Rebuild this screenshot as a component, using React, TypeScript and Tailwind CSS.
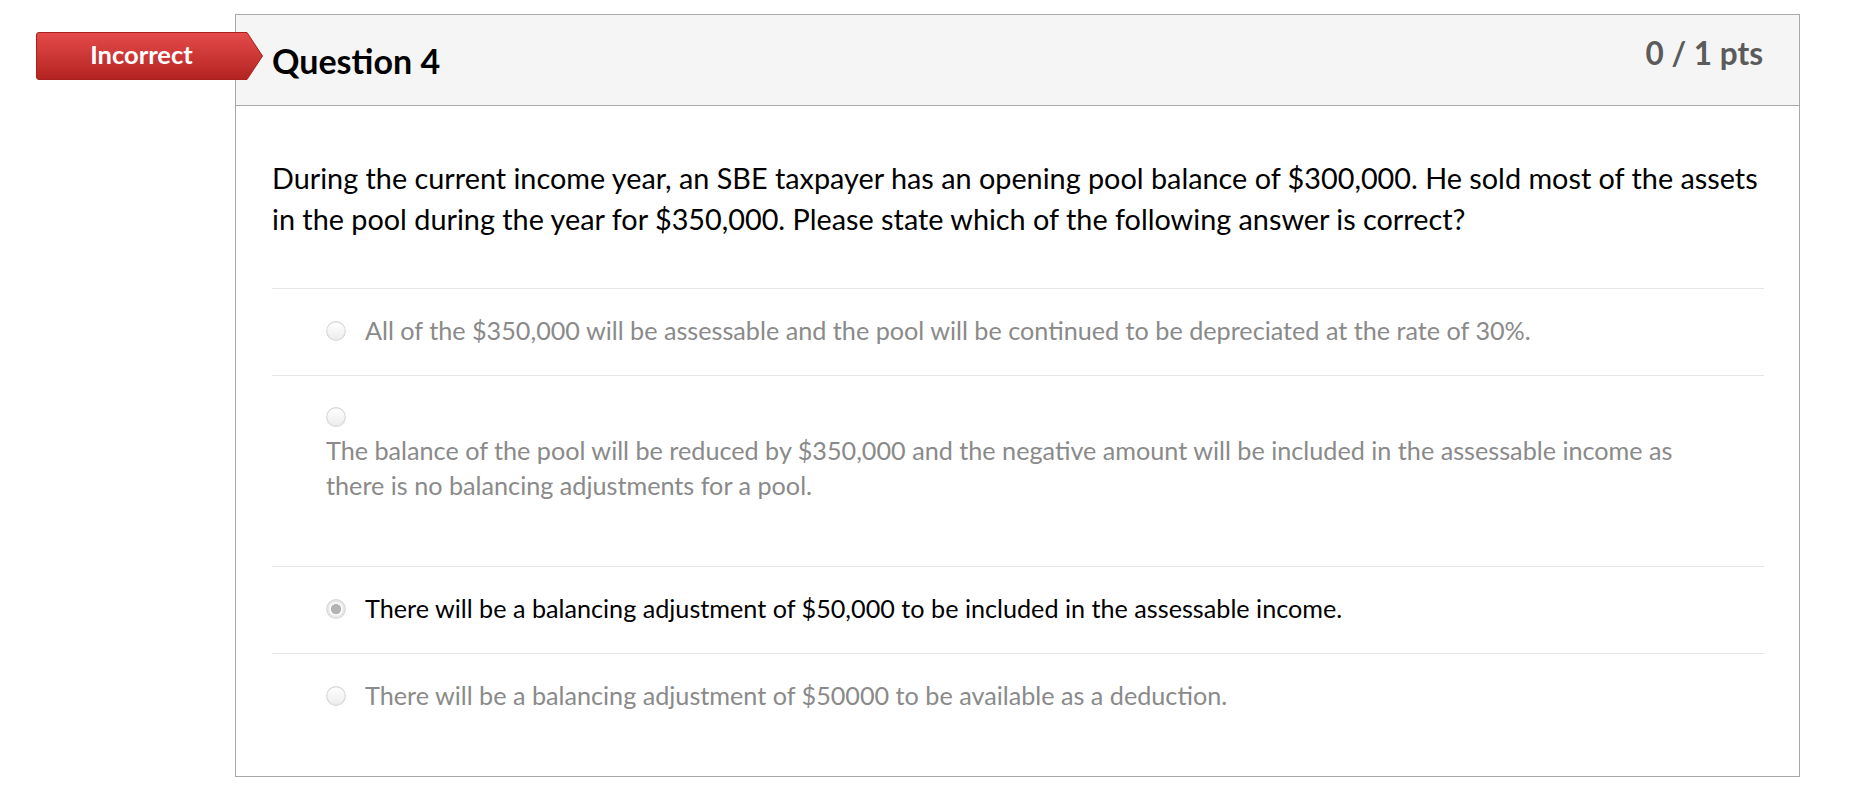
import React from "react";

function Radio({ checked }: { checked?: boolean }) {
  return (
    <svg width="20" height="20" viewBox="0 0 20 20" className="shrink-0">
      <defs>
        <linearGradient id={checked ? "rg1" : "rg0"} x1="0" y1="0" x2="0" y2="1">
          <stop offset="0" stopColor="#ffffff" />
          <stop offset="1" stopColor="#ececec" />
        </linearGradient>
      </defs>
      <circle cx="10" cy="10" r="9.3" fill={checked ? "#e9e9e9" : "url(#rg0)"} stroke="#d8d8d8" strokeWidth="1.2" />
      {checked && (
        <>
          <circle cx="10" cy="10" r="6.6" fill="#ffffff" />
          <circle cx="10" cy="10" r="5.2" fill="#b3b3b3" />
        </>
      )}
    </svg>
  );
}

function Option({ text, checked }: { text: string; checked?: boolean }) {
  return (
    <div className="border-t border-[#e6e6e6] pt-[24px] pb-[27px] pl-[54px]">
      <div className="flex items-center h-[35px] gap-[19px]">
        <Radio checked={checked} />
        <span className={checked ? "text-black" : "text-[#8a8a8a]"}>{text}</span>
      </div>
    </div>
  );
}

export default function App() {
  return (
    <div className="relative w-full h-[796px] bg-white font-[Lato,sans-serif] overflow-hidden">
      <div className="pt-[14px] pl-[235px]">
        <div className="w-[1565px] h-[763px] border border-[#a9a9a9] bg-white">
          <div className="h-[91px] bg-[#f5f5f5] border-b border-[#a9a9a9] flex justify-between px-[36px]">
            <h2 className="pt-[29px] text-[34px] leading-[34px] font-bold text-black">Question 4</h2>
            <div className="pt-[23px] text-[31.5px] leading-[31.5px] font-bold text-[#5b5b5b]">0 / 1 pts</div>
          </div>
          <div className="pl-[36px] pr-[35px] pt-[52px]">
            <p className="text-[28.8px] leading-[41px] text-black whitespace-nowrap">
              During the current income year, an SBE taxpayer has an opening pool balance of $300,000. He sold most of the assets
              <br />
              in the pool during the year for $350,000. Please state which of the following answer is correct?
            </p>
            <div className="mt-[48px] text-[25.2px] leading-[35px]">
              <Option text="All of the $350,000 will be assessable and the pool will be continued to be depreciated at the rate of 30%." />
              <div className="border-t border-[#e6e6e6] pt-[24px] pb-[63px] pl-[54px]">
                <div className="flex items-center h-[33px]">
                  <Radio />
                </div>
                <p className="text-[#8a8a8a]">
                  The balance of the pool will be reduced by $350,000 and the negative amount will be included in the assessable income as
                  <br />
                  there is no balancing adjustments for a pool.
                </p>
              </div>
              <Option text="There will be a balancing adjustment of $50,000 to be included in the assessable income." checked />
              <div className="border-t border-[#e6e6e6] pt-[24px] pl-[54px]">
                <div className="flex items-center h-[35px] gap-[19px]">
                  <Radio />
                  <span className="text-[#8a8a8a]">There will be a balancing adjustment of $50000 to be available as a deduction.</span>
                </div>
              </div>
            </div>
          </div>
        </div>
      </div>

      <div className="absolute left-[36px] top-[32px] w-[227px] h-[48px]">
        <svg width="227" height="48" viewBox="0 0 227 48" className="absolute inset-0">
          <defs>
            <linearGradient id="badge" x1="0" y1="0" x2="0" y2="1">
              <stop offset="0" stopColor="#e54b4b" />
              <stop offset="1" stopColor="#b32320" />
            </linearGradient>
          </defs>
          <path d="M3,0.5 H211 L226.5,24 L211,47.5 H3 Q0.5,47.5 0.5,45 V3 Q0.5,0.5 3,0.5 Z" fill="url(#badge)" stroke="#a8211e" strokeWidth="1" />
        </svg>
        <div className="absolute left-0 top-0 w-[211px] h-[48px] flex items-center justify-center text-white font-bold text-[25.5px] leading-none pb-[2px]">
          Incorrect
        </div>
      </div>
    </div>
  );
}
